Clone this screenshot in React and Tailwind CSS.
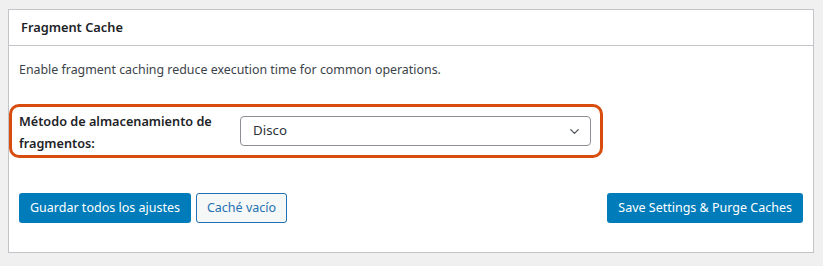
import { ChevronDown } from 'lucide-react';

const App = () => {
  return (
    <div
      className="w-[823px] h-[266px] bg-[#f0f0f1] pt-[9px] pl-[8px] pr-[9px]"
      style={{ fontFamily: '"Noto Sans", "Open Sans", sans-serif' }}
    >
      <div className="bg-white border border-[#c3c4c7] h-[244px] flex flex-col">
        {/* header */}
        <div className="h-[36px] border-b border-[#c3c4c7] flex items-center px-[12px]">
          <h2 className="text-[12.8px] font-semibold text-[#1d2327]">Fragment Cache</h2>
        </div>

        <div className="px-[10px] pt-[14px] flex-1 flex flex-col">
          <p className="text-[12.4px] text-[#3c434a] leading-[20px]">
            Enable fragment caching reduce execution time for common operations.
          </p>

          {/* highlighted row */}
          <div className="mt-[24px] ml-[-10px] w-[594px] h-[54px] border-[3px] border-[#d84d0e] rounded-[10px] flex items-center pl-[7px] pr-[9px]">
            <label className="w-[215px] pt-[2px] text-[12.7px] font-semibold text-[#1d2327] leading-[22px]">
              Método de almacenamiento de fragmentos:
            </label>
            <div className="ml-auto w-[351px] h-[30px] border border-[#8c8f94] rounded-[4px] bg-white flex items-center pl-[12px] pr-[8px]">
              <span className="text-[13.3px] text-[#2c3338]">Disco</span>
              <ChevronDown className="ml-auto w-[15px] h-[15px] text-[#50575e]" strokeWidth={2.2} />
            </div>
          </div>

          {/* buttons */}
          <div className="mt-[35px] flex items-center">
            <button className="h-[30px] px-[11px] bg-[#007cba] rounded-[3px] text-white text-[12.5px]">
              Guardar todos los ajustes
            </button>
            <button className="ml-[5px] h-[30px] px-[10px] bg-[#f6f7f7] border border-[#2271b1] rounded-[3px] text-[#2271b1] text-[12.5px]">
              Caché vacío
            </button>
            <button className="ml-auto h-[30px] px-[11px] bg-[#007cba] rounded-[3px] text-white text-[12.5px]">
              Save Settings &amp; Purge Caches
            </button>
          </div>
        </div>
      </div>
    </div>
  );
};

export default App;
